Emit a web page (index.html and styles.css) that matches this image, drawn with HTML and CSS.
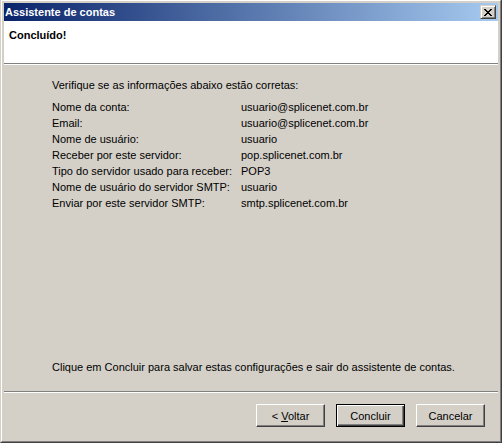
FILE: index.html
```html
<!DOCTYPE html>
<html lang="pt-BR">
<head>
<meta charset="utf-8">
<title>Assistente de contas</title>
<link rel="stylesheet" href="styles.css">
</head>
<body>
<div class="window">
  <div class="frame">
    <div class="titlebar">
      <span class="title">Assistente de contas</span>
      <button class="close" aria-label="Fechar">
        <svg width="8" height="7" viewBox="0 0 8 7" shape-rendering="crispEdges">
          <g fill="#000">
            <rect x="0" y="0" width="2" height="1"/><rect x="6" y="0" width="2" height="1"/>
            <rect x="1" y="1" width="2" height="1"/><rect x="5" y="1" width="2" height="1"/>
            <rect x="2" y="2" width="4" height="1"/>
            <rect x="3" y="3" width="2" height="1"/>
            <rect x="2" y="4" width="4" height="1"/>
            <rect x="1" y="5" width="2" height="1"/><rect x="5" y="5" width="2" height="1"/>
            <rect x="0" y="6" width="2" height="1"/><rect x="6" y="6" width="2" height="1"/>
          </g>
        </svg>
      </button>
    </div>
    <div class="header">Concluído!</div>
    <div class="sep"></div>
    <div class="content">
      <p class="intro">Verifique se as informações abaixo estão corretas:</p>
      <div class="summary">
        <span>Nome da conta:</span><span>usuario@splicenet.com.br</span>
        <span>Email:</span><span>usuario@splicenet.com.br</span>
        <span>Nome de usuário:</span><span>usuario</span>
        <span>Receber por este servidor:</span><span>pop.splicenet.com.br</span>
        <span>Tipo do servidor usado para receber:</span><span>POP3</span>
        <span>Nome de usuário do servidor SMTP:</span><span>usuario</span>
        <span>Enviar por este servidor SMTP:</span><span>smtp.splicenet.com.br</span>
      </div>
      <p class="outro">Clique em Concluir para salvar estas configurações e sair do assistente de contas.</p>
    </div>
    <div class="sep"></div>
    <div class="buttons">
      <button class="btn">&lt; <span class="u">V</span>oltar</button>
      <button class="btn default">Concluir</button>
      <button class="btn">Cancelar</button>
    </div>
  </div>
</div>
</body>
</html>
```
FILE: styles.css
```css
html, body {
  margin: 0;
  padding: 0;
  overflow: hidden;
  background: #D4D0C8;
}
body {
  font-family: "Liberation Sans", Arial, sans-serif;
  font-size: 11px;
  color: #000;
}
.window {
  margin-top: -1px;
  width: 502px;
  height: 444px;
  box-sizing: border-box;
  border: 1px solid;
  border-color: #D4D0C8 #404040 #404040 #D4D0C8;
  background: #D4D0C8;
}
.frame {
  height: 100%;
  box-sizing: border-box;
  border: 1px solid;
  border-color: #FFFFFF #808080 #808080 #FFFFFF;
  padding: 2px;
  display: flex;
  flex-direction: column;
}
.titlebar {
  height: 18px;
  flex: none;
  display: flex;
  align-items: center;
  justify-content: space-between;
  background: linear-gradient(to right, #0A246A, #A6CAF0);
  padding: 0 2px 0 1px;
}
.title {
  color: #fff;
  font-weight: bold;
  line-height: 18px;
}
.close {
  width: 16px;
  height: 14px;
  padding: 0;
  margin: 0;
  box-sizing: border-box;
  background: #D4D0C8;
  border: 1px solid;
  border-color: #D4D0C8 #404040 #404040 #D4D0C8;
  box-shadow: inset 1px 1px #fff, inset -1px -1px #808080;
  display: flex;
  align-items: center;
  justify-content: center;
}
.close svg {
  display: block;
  margin-left: -1px;
}
.header {
  flex: none;
  height: 42px;
  box-sizing: border-box;
  background: #fff;
  font-weight: bold;
  line-height: 13px;
  padding: 8px 0 0 5px;
}
.sep {
  flex: none;
  height: 1px;
  background: #808080;
  border-bottom: 1px solid #fff;
}
.content {
  flex: 1;
  display: flex;
  flex-direction: column;
  padding: 12px 0 16px 48px;
  line-height: 16px;
}
.intro, .outro {
  margin: 0;
}
.intro {
  margin-bottom: 6px;
}
.summary {
  display: grid;
  grid-template-columns: 189px auto;
}
.outro {
  margin-top: auto;
}
.buttons {
  flex: none;
  display: flex;
  justify-content: flex-end;
  gap: 11px;
  padding: 11px 13px 12px 0;
}
.btn {
  width: 69px;
  height: 23px;
  padding: 0;
  margin: 0;
  box-sizing: border-box;
  font-family: "Liberation Sans", Arial, sans-serif;
  font-size: 11px;
  color: #000;
  background: #D4D0C8;
  border: 1px solid;
  border-color: #fff #404040 #404040 #fff;
  box-shadow: inset -1px -1px #808080;
}
.btn.default {
  border-color: #000;
  box-shadow: inset 1px 1px #fff, inset -1px -1px #404040, inset -2px -2px #808080;
}
.u {
  text-decoration: underline;
}
```
